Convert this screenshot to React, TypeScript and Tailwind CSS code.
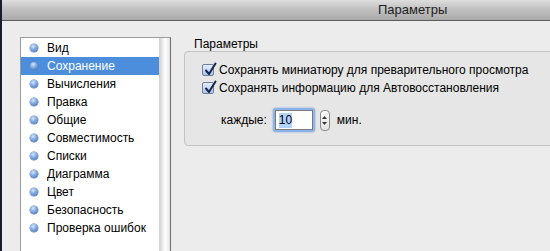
import React from "react";

const items = [
  "Вид",
  "Сохранение",
  "Вычисления",
  "Правка",
  "Общие",
  "Совместимость",
  "Списки",
  "Диаграмма",
  "Цвет",
  "Безопасность",
  "Проверка ошибок",
];

function Bullet() {
  return (
    <span className="inline-block shrink-0 w-[8px] h-[8px] rounded-full bg-[radial-gradient(circle_at_40%_30%,#d6e6fa_0%,#7ea6e0_45%,#3b66aa_100%)] shadow-[0_0_0_0.5px_#5d7fb5]" />
  );
}

function Checkbox() {
  return (
    <span className="relative shrink-0 inline-flex w-[12px] h-[12px] rounded-[2px] border border-[#6f7f99] bg-[linear-gradient(#e4eefb,#a9c5ec)]">
      <svg className="absolute left-[1px] -top-[3px]" width="13" height="14" viewBox="0 0 13 14">
        <path d="M2 8.5 L5 12 L11.5 1.5" fill="none" stroke="#16264a" strokeWidth="2" strokeLinecap="round" strokeLinejoin="round" />
      </svg>
    </span>
  );
}

export default function App() {
  return (
    <div
      className="w-[550px] h-[251px] overflow-hidden flex bg-[#1b1a35] whitespace-nowrap"
      style={{ fontFamily: '"Liberation Sans", Arial, sans-serif' }}
    >
      <div className="w-[2px] shrink-0" />
      <div className="flex-1 flex flex-col bg-[#ececec]">
        <div className="h-[21px] shrink-0 flex items-center border-b border-[#5a5a5a] bg-[linear-gradient(#dedede,#c4c4c4_40%,#a9a9a9)]">
          <div className="w-[376px]" />
          <span className="text-[13px] text-[#1e1e1e]">Параметры</span>
        </div>
        <div className="flex-1 flex pt-[16px]">
          <div className="w-[18px] shrink-0" />
          <div className="w-[151px] shrink-0 flex border-t border-l border-[#9c9c9c] border-r border-r-[#6e6e6e]">
            <div className="flex-1 bg-white pt-[1px]">
              {items.map((it, i) => (
                <div
                  key={it}
                  className={`h-[18px] flex items-center pl-[9px] text-[12px] ${
                    i === 1 ? "bg-[#4c8edb] text-white" : "text-black"
                  }`}
                >
                  <Bullet />
                  <span className="ml-[9px]">{it}</span>
                </div>
              ))}
            </div>
            <div className="w-[11px] bg-[linear-gradient(90deg,#cfcfcf,#f6f6f6_45%,#ffffff_60%,#e2e2e2)]" />
          </div>
          <div className="flex-1 pl-[13px]">
            <div className="text-[12px] text-black pl-[10px] leading-[14px]">Параметры</div>
            <div className="h-[95px] rounded-[4px] border border-[#c3c3c3] bg-[#e6e6e6] pl-[17px] pt-[9px] -mr-[10px]">
              <div className="flex items-center h-[18px]">
                <Checkbox />
                <span className="ml-[5px] text-[12px] text-black">Сохранять миниатюру для преварительного просмотра</span>
              </div>
              <div className="flex items-center h-[18px]">
                <Checkbox />
                <span className="ml-[5px] text-[12px] text-black">Сохранять информацию для Автовосстановления</span>
              </div>
              <div className="flex items-center mt-[11px] pl-[19px]">
                <span className="text-[12px] text-black">каждые:</span>
                <div className="ml-[6px] rounded-[3px] p-[2px] bg-[#8db4e6] shadow-[0_0_2px_#6f9fdf]">
                  <div className="w-[38px] h-[20px] bg-white border border-[#7b7b7b] flex items-center pl-[3px]">
                    <span className="text-[12px] text-black bg-[#b3d3fd] leading-[15px]">10</span>
                  </div>
                </div>
                <div className="ml-[5px] w-[10px] h-[21px] rounded-[4px] border border-[#8a8a8a] bg-[linear-gradient(#fafafa,#e3e3e3)] flex flex-col items-center justify-center gap-[3px]">
                  <svg width="5" height="3" viewBox="0 0 5 3"><path d="M0 3 L2.5 0 L5 3Z" fill="#333" /></svg>
                  <svg width="5" height="3" viewBox="0 0 5 3"><path d="M0 0 L2.5 3 L5 0Z" fill="#333" /></svg>
                </div>
                <span className="ml-[7px] text-[12px] text-black">мин.</span>
              </div>
            </div>
          </div>
        </div>
      </div>
    </div>
  );
}
